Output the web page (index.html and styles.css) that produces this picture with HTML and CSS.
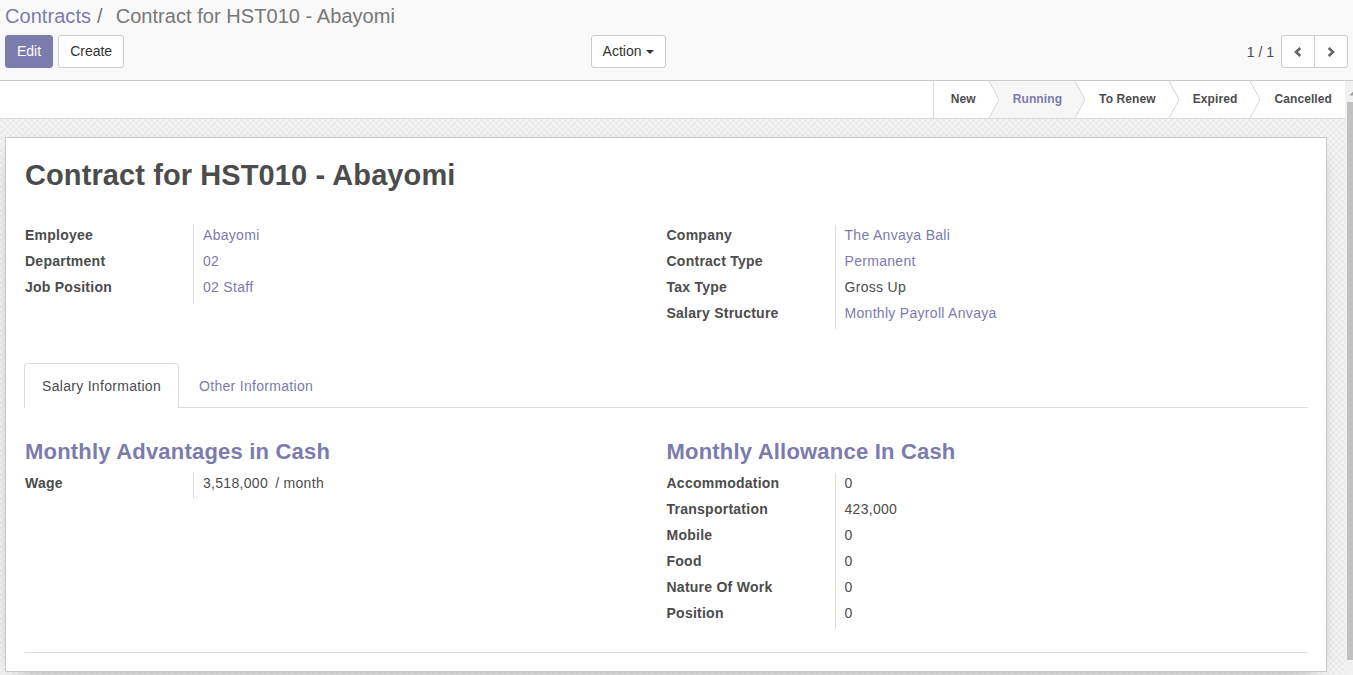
FILE: index.html
```html
<!DOCTYPE html>
<html>
<head>
<meta charset="utf-8">
<title>Contract for HST010 - Abayomi</title>
<link rel="stylesheet" href="styles.css">
</head>
<body>
<div class="cp">
  <ol class="breadcrumb">
    <li class="bc-link">Contracts</li>
    <li class="bc-sep">/</li>
    <li class="bc-active">Contract for HST010 - Abayomi</li>
  </ol>
  <div class="cp-bottom">
    <div class="cp-left">
      <div class="cp-buttons">
        <button class="btn btn-primary">Edit</button>
        <button class="btn btn-default">Create</button>
      </div>
      <button class="btn btn-default btn-action">Action<span class="caret"></span></button>
    </div>
    <div class="cp-right">
      <span class="pager-value">1 / 1</span>
      <div class="pager-btns">
        <button class="btn btn-default pager-btn"><svg width="8" height="10" viewBox="0 0 8 10"><polyline points="6.3,1 2,5 6.3,9" fill="none" stroke="#666" stroke-width="2.6"/></svg></button>
        <button class="btn btn-default pager-btn"><svg width="8" height="10" viewBox="0 0 8 10"><polyline points="1.7,1 6,5 1.7,9" fill="none" stroke="#666" stroke-width="2.6"/></svg></button>
      </div>
    </div>
  </div>
</div>
<div class="main">
  <div class="content">
    <div class="statusbar">
      <div class="st first">New</div>
      <svg class="chev" width="10" height="37" viewBox="0 0 10 37"><polygon points="0,0 10,18.5 0,37 10,37 10,0" fill="#f6f6f6"/><polyline points="0,0 10,18.5 0,37" fill="none" stroke="#d6d6d6" stroke-width="1"/></svg>
      <div class="st current">Running</div>
      <svg class="chev" width="10" height="37" viewBox="0 0 10 37"><polygon points="0,0 10,18.5 0,37" fill="#f6f6f6"/><polyline points="0,0 10,18.5 0,37" fill="none" stroke="#d6d6d6" stroke-width="1"/></svg>
      <div class="st">To Renew</div>
      <svg class="chev" width="10" height="37" viewBox="0 0 10 37"><polyline points="0,0 10,18.5 0,37" fill="none" stroke="#d6d6d6" stroke-width="1"/></svg>
      <div class="st">Expired</div>
      <svg class="chev" width="10" height="37" viewBox="0 0 10 37"><polyline points="0,0 10,18.5 0,37" fill="none" stroke="#d6d6d6" stroke-width="1"/></svg>
      <div class="st last">Cancelled</div>
    </div>
    <div class="sheet-bg">
      <div class="sheet">
        <h1 class="title">Contract for HST010 - Abayomi</h1>
        <div class="groups head-groups">
          <div class="fields">
            <div class="lbl">Employee</div><div class="val link">Abayomi</div>
            <div class="lbl">Department</div><div class="val link">02</div>
            <div class="lbl">Job Position</div><div class="val link">02 Staff</div>
          </div>
          <div class="fields">
            <div class="lbl">Company</div><div class="val link">The Anvaya Bali</div>
            <div class="lbl">Contract Type</div><div class="val link">Permanent</div>
            <div class="lbl">Tax Type</div><div class="val">Gross Up</div>
            <div class="lbl">Salary Structure</div><div class="val link">Monthly Payroll Anvaya</div>
          </div>
        </div>
        <div class="tabs">
          <div class="tab active">Salary Information</div>
          <div class="tab">Other Information</div>
        </div>
        <div class="groups pane-groups">
          <div class="group">
            <h2 class="sep">Monthly Advantages in Cash</h2>
            <div class="fields">
              <div class="lbl">Wage</div><div class="val">3,518,000 <span class="unit">/ month</span></div>
            </div>
          </div>
          <div class="group">
            <h2 class="sep">Monthly Allowance In Cash</h2>
            <div class="fields">
              <div class="lbl">Accommodation</div><div class="val">0</div>
              <div class="lbl">Transportation</div><div class="val">423,000</div>
              <div class="lbl">Mobile</div><div class="val">0</div>
              <div class="lbl">Food</div><div class="val">0</div>
              <div class="lbl">Nature Of Work</div><div class="val">0</div>
              <div class="lbl">Position</div><div class="val">0</div>
            </div>
          </div>
        </div>
        <div class="sheet-end"></div>
      </div>
    </div>
  </div>
  <div class="scrollbar">
    <div class="sb-arrow"><svg width="8" height="17" viewBox="0 0 8 17"><polygon points="8.5,10 4.5,14.5 12.5,14.5" fill="#a0a0a0"/></svg></div>
    <div class="sb-thumb"></div>
  </div>
</div>
</body>
</html>
```

FILE: styles.css
```css
html, body {
  margin: 0;
  padding: 0;
}
body {
  font-family: "Liberation Sans", Arial, sans-serif;
  font-size: 14px;
  color: #4c4c4c;
  height: 675px;
  overflow: hidden;
  display: flex;
  flex-direction: column;
  background: #fff;
}

/* control panel */
.cp {
  flex: none;
  background: #f9f9f9;
  border-bottom: 1px solid #cacaca;
  padding: 1px 5px 12px 5px;
}
.breadcrumb {
  list-style: none;
  margin: 0;
  padding: 0;
  display: flex;
  font-size: 20px;
  line-height: 30px;
  white-space: nowrap;
  letter-spacing: 0.05px;
}
.bc-link { color: #7c7bad; }
.bc-sep { color: #777; margin: 0 13px 0 6px; }
.bc-active { color: #777; }

.cp-bottom {
  display: flex;
  margin-top: 4px;
}
.cp-left {
  flex: 0 0 50%;
  box-sizing: border-box;
  padding-right: 11px;
  display: flex;
  justify-content: space-between;
}
.cp-buttons {
  display: flex;
  gap: 5px;
}
.cp-right {
  flex: 1;
  display: flex;
  justify-content: flex-end;
  align-items: center;
}
.btn {
  font-family: "Liberation Sans", Arial, sans-serif;
  font-size: 14px;
  height: 33px;
  line-height: 31px;
  padding: 0 11px;
  border: 1px solid #ccc;
  border-radius: 3px;
  background: #fff;
  color: #333;
  margin: 0;
  display: inline-flex;
  align-items: center;
  box-sizing: border-box;
}
.btn-primary {
  background: #7c7bad;
  border-color: #7c7bad;
  color: #fff;
}
.btn-action .caret {
  display: inline-block;
  width: 0;
  height: 0;
  margin-left: 4px;
  margin-top: 1px;
  border-top: 4px solid #333;
  border-left: 4px solid transparent;
  border-right: 4px solid transparent;
}
.pager-value {
  margin-right: 7px;
  color: #4c4c4c;
}
.pager-btns {
  display: flex;
}
.pager-btn {
  width: 34px;
  justify-content: center;
  padding: 0;
}
.pager-btn:first-child {
  border-radius: 3px 0 0 3px;
}
.pager-btn + .pager-btn {
  margin-left: -1px;
  border-radius: 0 3px 3px 0;
}

/* main area */
.main {
  flex: 1;
  display: flex;
  min-height: 0;
}
.content {
  flex: 1;
  min-width: 0;
  display: flex;
  flex-direction: column;
}
.statusbar {
  flex: none;
  height: 37px;
  background: #fff;
  border-bottom: 1px solid #d9d9d9;
  display: flex;
  justify-content: flex-end;
}
.st {
  font-size: 12px;
  font-weight: bold;
  line-height: 37px;
  letter-spacing: 0.1px;
  padding: 0 13px 0 14px;
  color: #4c4c4c;
  white-space: nowrap;
}
.st.first {
  border-left: 1px solid #d9d9d9;
  padding-left: 17px;
}
.st.current {
  color: #7c7bad;
  background: #f6f6f6;
}
.chev {
  display: block;
  flex: none;
}

.sheet-bg {
  flex: 1;
  padding: 18px 18px 0 5px;
  background-color: #f0f0f0;
  background-image: conic-gradient(#f4f4f4 25%, #ebebeb 0 50%, #f4f4f4 0 75%, #ebebeb 0);
  background-size: 6px 6px;
}
.sheet {
  background: #fff;
  border: 1px solid #c8c8d3;
  box-shadow: 0 5px 20px -15px #000;
  padding: 21px 18px 18px 19px;
  letter-spacing: 0.3px;
}
.title {
  margin: 0;
  font-size: 29px;
  line-height: 32px;
  font-weight: bold;
  color: #4c4c4c;
  letter-spacing: 0.1px;
}
.groups {
  display: grid;
  grid-template-columns: 1fr 1fr;
}
.head-groups {
  margin-top: 34px;
  align-items: start;
}
.fields {
  display: grid;
  grid-template-columns: 169px 1fr;
  align-content: start;
}
.lbl {
  font-weight: bold;
  line-height: 20px;
  padding-bottom: 6px;
  border-right: 1px solid #ddd;
  white-space: nowrap;
  letter-spacing: 0.25px;
}
.val {
  line-height: 20px;
  padding: 0 0 6px 9px;
  color: #4c4c4c;
  white-space: nowrap;
}
.val.link { color: #7c7bad; }
.unit { margin-left: 3px; }

.tabs {
  display: flex;
  margin-top: 34px;
  border-bottom: 1px solid #ddd;
}
.tab {
  padding: 12px 17px;
  line-height: 20px;
  border: 1px solid transparent;
  border-bottom: none;
  border-radius: 4px 4px 0 0;
  margin: 0 2px -1px 0;
  color: #7c7bad;
  white-space: nowrap;
}
.tab:first-child { margin-left: -1px; }
.tab.active {
  color: #4c4c4c;
  background: #fff;
  border-color: #ddd;
}
.pane-groups {
  margin-top: 31px;
}
.sep {
  margin: 0 0 8px 0;
  font-size: 22px;
  line-height: 26px;
  font-weight: bold;
  color: #7c7bad;
  white-space: nowrap;
  letter-spacing: 0.2px;
}
.sheet-end {
  margin-top: 23px;
  border-top: 1px solid #ddd;
}

/* scrollbar */
.scrollbar {
  flex: none;
  width: 8px;
  background: #f1f1f1;
  display: flex;
  flex-direction: column;
  overflow: hidden;
}
.sb-arrow {
  height: 17px;
  flex: none;
}
.sb-arrow svg {
  display: block;
  overflow: visible;
}
.sb-thumb {
  flex: none;
  margin: 4px 0 0 2px;
  height: 558px;
  background: #c1c1c1;
}
```
